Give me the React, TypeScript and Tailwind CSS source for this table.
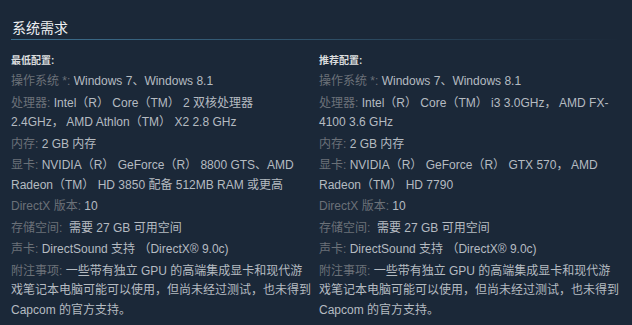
import React from "react";

type Item = { label: string; value: string };

const left: Item[] = [
  { label: "操作系统 *:", value: "Windows 7、Windows 8.1" },
  { label: "处理器:", value: "Intel（R） Core（TM） 2 双核处理器\n2.4GHz， AMD Athlon（TM） X2 2.8 GHz" },
  { label: "内存:", value: "2 GB 内存" },
  { label: "显卡:", value: "NVIDIA（R） GeForce（R） 8800 GTS、AMD Radeon（TM） HD 3850 配备 512MB RAM 或更高" },
  { label: "DirectX 版本:", value: "10" },
  { label: "存储空间:", value: " 需要 27 GB 可用空间" },
  { label: "声卡:", value: "DirectSound 支持 （DirectX® 9.0c)" },
  { label: "附注事项:", value: "一些带有独立 GPU 的高端集成显卡和现代游戏笔记本电脑可能可以使用，但尚未经过测试，也未得到 Capcom 的官方支持。" },
];

const right: Item[] = [
  { label: "操作系统 *:", value: "Windows 7、Windows 8.1" },
  { label: "处理器:", value: "Intel（R） Core（TM） i3 3.0GHz， AMD FX-4100 3.6 GHz" },
  { label: "内存:", value: "2 GB 内存" },
  { label: "显卡:", value: "NVIDIA（R） GeForce（R） GTX 570， AMD Radeon（TM） HD 7790" },
  { label: "DirectX 版本:", value: "10" },
  { label: "存储空间:", value: " 需要 27 GB 可用空间" },
  { label: "声卡:", value: "DirectSound 支持 （DirectX® 9.0c)" },
  { label: "附注事项:", value: "一些带有独立 GPU 的高端集成显卡和现代游戏笔记本电脑可能可以使用，但尚未经过测试，也未得到 Capcom 的官方支持。" },
];

function Col({ title, items }: { title: string; items: Item[] }) {
  return (
    <div>
      <div className="text-[10px] font-bold leading-[14px] text-[#dcdedf] mb-[4px]">{title}</div>
      <ul>
        {items.map((it, i) => (
          <li key={i} className="leading-[19.5px] mb-[2px] text-[12px] text-[#b5bbc1]">
            <span className="text-[#6b7178]">{it.label}</span>{" "}
            <span className="whitespace-pre-wrap">{it.value}</span>
          </li>
        ))}
      </ul>
    </div>
  );
}

export default function App() {
  return (
    <div
      className="w-[632px] h-[325px] bg-[#1b2838] overflow-hidden"
      style={{ fontFamily: '"Liberation Sans", Arial, "Noto Sans CJK SC", sans-serif' }}
    >
      <div className="pt-[20px] px-[11px]">
        <div className="text-[14px] leading-[17px] text-[#eef0f2] pl-[1px] pb-[2px]">系统需求</div>
        <div className="h-px bg-gradient-to-r from-[#3d6f8e] via-[#2f5068] to-transparent" />
      </div>
      <div className="grid grid-cols-[300px_302px] gap-[8px] px-[11px] pt-[14px]">
        <Col title="最低配置:" items={left} />
        <Col title="推荐配置:" items={right} />
      </div>
    </div>
  );
}
